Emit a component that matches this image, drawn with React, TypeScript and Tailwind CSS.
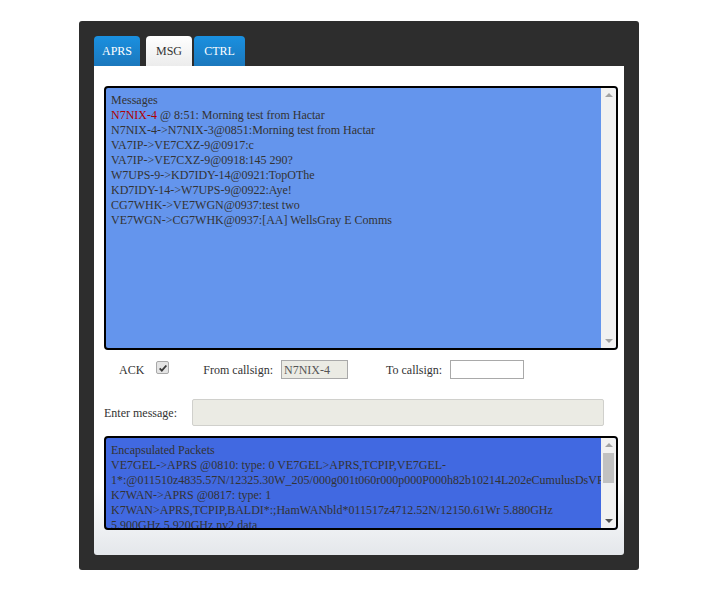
import React from 'react'

const messages = [
  'N7NIX-4->N7NIX-3@0851:Morning test from Hactar',
  'VA7IP->VE7CXZ-9@0917:c',
  'VA7IP->VE7CXZ-9@0918:145 290?',
  'W7UPS-9->KD7IDY-14@0921:TopOThe',
  'KD7IDY-14->W7UPS-9@0922:Aye!',
  'CG7WHK->VE7WGN@0937:test two',
  'VE7WGN->CG7WHK@0937:[AA] WellsGray E Comms',
]

const packets = [
  'VE7GEL->APRS @0810: type: 0 VE7GEL>APRS,TCPIP,VE7GEL-1*:@011510z4835.57N/12325.30W_205/000g001t060r000p000P000h82b10214L202eCumulusDsVP',
  'K7WAN->APRS @0817: type: 1 K7WAN>APRS,TCPIP,BALDI*:;HamWANbld*011517z4712.52N/12150.61Wr 5.880GHz 5.900GHz 5.920GHz nv2 data',
]

function Scrollbar({ thumb }: { thumb?: boolean }) {
  return (
    <div className="w-[15px] shrink-0 bg-[#f1f1f1] flex flex-col items-center justify-between py-[5px]">
      <div className="flex flex-col items-center">
        <div className="w-0 h-0 border-l-[4px] border-r-[4px] border-b-[4px] border-l-transparent border-r-transparent border-b-[#a3a3a3]" />
        {thumb && <div className="mt-[6px] w-[11px] h-[30px] bg-[#c1c1c1]" />}
      </div>
      <div className={'w-0 h-0 border-l-[4px] border-r-[4px] border-t-[4px] border-l-transparent border-r-transparent ' + (thumb ? 'border-t-[#505050]' : 'border-t-[#a3a3a3]')} />
    </div>
  )
}

export default function App() {
  return (
    <div className="min-h-[599px] bg-white pt-[21px] pl-[79px] font-['Liberation_Serif',serif] text-[12px]">
      <div className="w-[560px] h-[549px] bg-[#2d2d2d] rounded-[3px] p-[15px] flex flex-col">
        {/* tabs */}
        <div className="flex h-[30px] items-end">
          <div className="w-[46px] h-[30px] rounded-t-[4px] bg-[linear-gradient(to_bottom,#1a90e0,#1b78bd)] text-white flex items-center justify-center pb-px">APRS</div>
          <div className="ml-[6px] w-[46px] h-[30px] rounded-t-[4px] bg-[linear-gradient(to_bottom,#ffffff,#ececec)] text-[#333] flex items-center justify-center pb-px">MSG</div>
          <div className="ml-[2px] w-[51px] h-[30px] rounded-t-[4px] bg-[linear-gradient(to_bottom,#1a90e0,#1b78bd)] text-white flex items-center justify-center pb-px">CTRL</div>
        </div>

        {/* content */}
        <div className="flex-1 rounded-b-[3px] bg-[linear-gradient(to_bottom,#ffffff_86%,#e4e7eb)] pl-[10px] pt-[20px]">
          <div className="w-[514px] h-[264px] border-2 border-black rounded-[4px] bg-[#6495ed] flex overflow-hidden">
            <div className="flex-1 px-[5px] pt-[5px] leading-[15px] text-[#333] overflow-hidden">
              <div>Messages</div>
              <div>
                <span className="text-[#b00000]">N7NIX-4</span> @ 8:51: Morning test from Hactar
              </div>
              {messages.map((m) => (
                <div key={m}>{m}</div>
              ))}
            </div>
            <Scrollbar />
          </div>

          <div className="flex items-center h-[19px] mt-[10px] text-[#333]">
            <span className="ml-[15px]">ACK</span>
            <div className="ml-[12px] -mt-[4px] w-[13px] h-[13px] rounded-[2px] border border-[#a8a8a8] bg-[#e4e4e4] flex items-center justify-center">
              <svg viewBox="0 0 12 12" className="w-[10px] h-[10px]">
                <path d="M2 6.5l2.6 2.6L10 3" fill="none" stroke="#3a3a3a" strokeWidth="2.2" />
              </svg>
            </div>
            <span className="ml-[34px]">From callsign:</span>
            <div className="ml-[8px] w-[67px] h-[19px] border border-[#a9a9a9] bg-[#ebebe4] text-[#555] px-[2px] flex items-center">N7NIX-4</div>
            <span className="ml-[38px]">To callsign:</span>
            <div className="ml-[8px] w-[74px] h-[19px] border border-[#a9a9a9] bg-white" />
          </div>

          <div className="flex items-center h-[27px] mt-[20px] w-[500px] text-[#333]">
            <span>Enter message:</span>
            <div className="ml-auto w-[412px] h-[27px] rounded-[2px] border border-[#d0d0cc] bg-[#ebebe4]" />
          </div>

          <div className="w-[514px] h-[94px] mt-[10px] border-2 border-black rounded-[4px] bg-[#4169e1] flex overflow-hidden">
            <div className="flex-1 px-[5px] pt-[5px] leading-[15px] text-[#333] overflow-hidden">
              <div>Encapsulated Packets</div>
              {packets.map((p) => (
                <div key={p}>{p}</div>
              ))}
            </div>
            <Scrollbar thumb />
          </div>
        </div>
      </div>
    </div>
  )
}
